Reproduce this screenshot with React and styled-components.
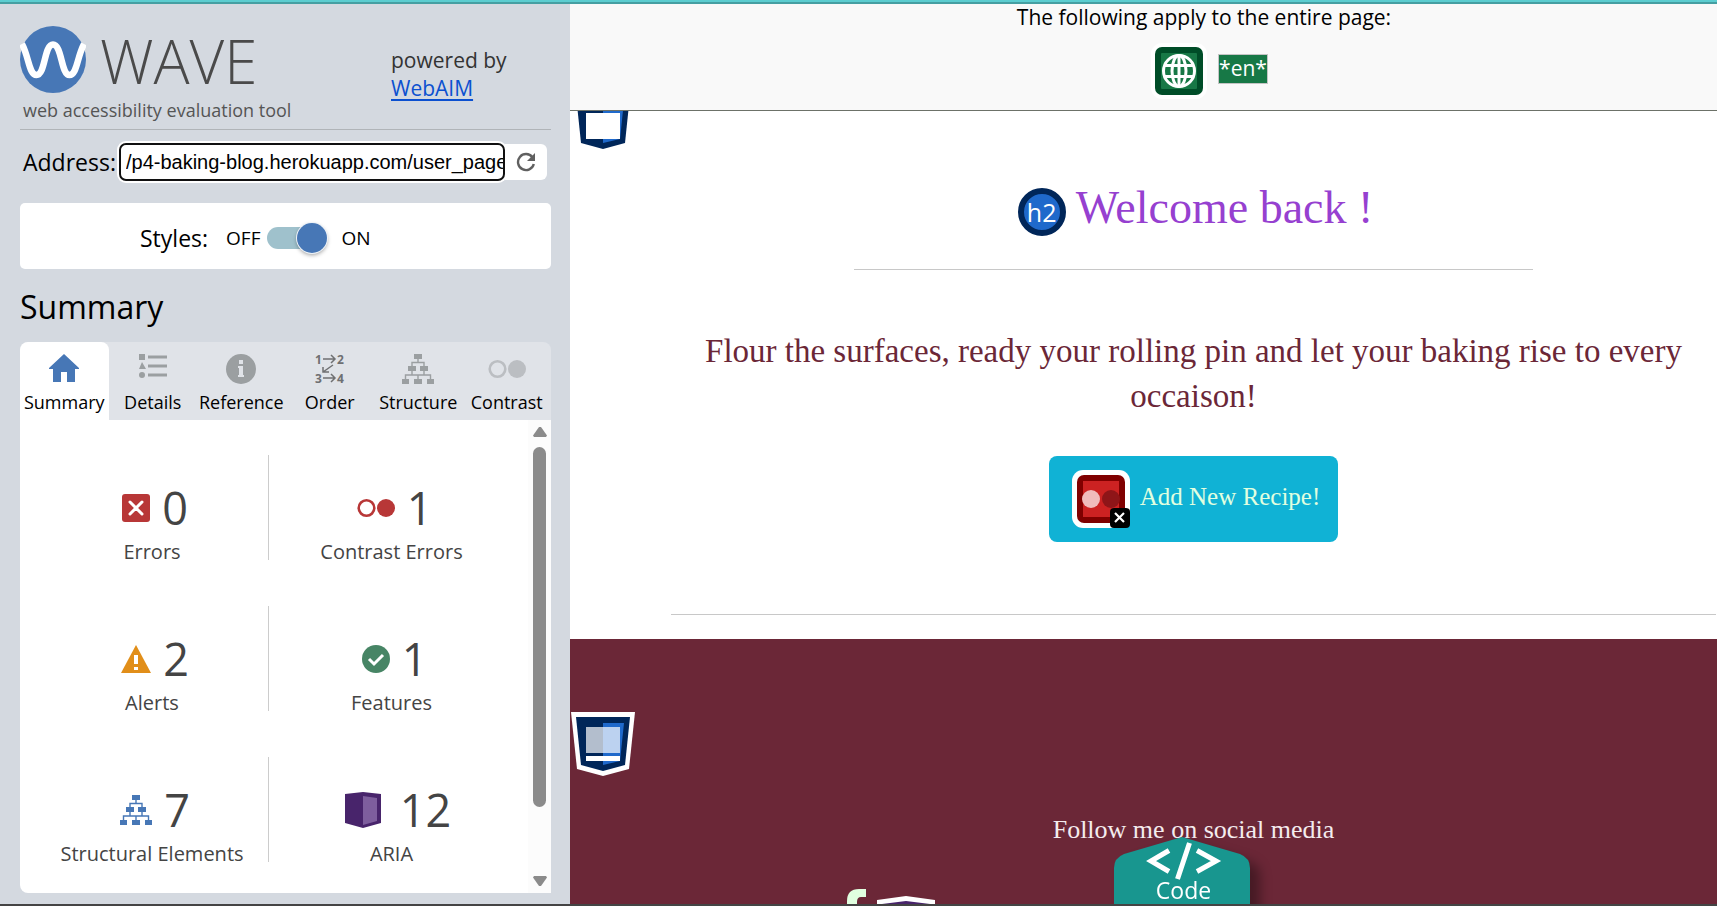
import React, { useState } from "react";
import styled, { createGlobalStyle } from "styled-components";

const sans = '"Open Sans", sans-serif';
const serif = '"Liberation Serif", serif';

const GlobalStyle = createGlobalStyle`
  *, *::before, *::after { box-sizing: border-box; }
  body { margin: 0; font-family: ${sans}; color: #000; background: #fff; }
  h1, h2, h3, p, dl, dd, dt { margin: 0; font-weight: 400; }
  button, input { font: inherit; color: inherit; }
  svg { display: block; flex: none; }
`;

const Window = styled.div`
  display: flex;
  height: 100vh;
  overflow: hidden;
  border-top: 2px solid #5ccdd0;
  border-bottom: 2px solid #444;
`;

const Sidebar = styled.aside`
  flex: 0 0 570px;
  display: flex;
  flex-direction: column;
  padding: 22px 19px 11px 20px;
  background: #d4d9e0;
  border-top: 2px solid #459fa2;
`;

const Masthead = styled.header`
  display: flex;
  justify-content: space-between;
  padding-bottom: 5px;
  border-bottom: 1px solid #b0b4b8;
`;

const Brand = styled.div`
  color: #4a4a4a;
`;

const BrandRow = styled.div`
  display: flex;
  gap: 14px;
`;

const Wordmark = styled.h1`
  font-size: 60px;
  font-weight: 300;
  line-height: 70px;
`;

const Tagline = styled.p`
  padding-left: 3px;
  font-size: 18px;
  line-height: 28px;
  color: #555;
`;

const Powered = styled.p`
  display: flex;
  flex-direction: column;
  align-items: flex-start;
  width: 160px;
  padding-top: 20px;
  font-size: 21px;
  line-height: 28px;
  color: #333;
`;

const Link = styled.a`
  color: #0b50d0;
  text-underline-offset: 3px;
`;

const AddressForm = styled.form`
  display: flex;
  align-items: center;
  margin: 13px 4px 0 3px;
`;

const FieldLabel = styled.label`
  font-size: 23px;
  line-height: 28px;
`;

const AddressInput = styled.input`
  flex: 1;
  min-width: 0;
  height: 38px;
  margin-left: 3px;
  padding: 0 0 0 5px;
  border: 2px solid #101010;
  border-radius: 7px;
  box-shadow: 0 0 0 2px #fff;
  background: #fff;
  font-family: "Liberation Sans", Arial, sans-serif;
  font-size: 20px;
  outline: none;
`;

const ReloadButton = styled.button`
  display: grid;
  place-items: center;
  width: 42px;
  height: 36px;
  padding: 0;
  border: 0;
  border-radius: 0 6px 6px 0;
  background: #fff;
`;

const StylesCard = styled.div`
  display: flex;
  align-items: center;
  height: 66px;
  margin-top: 22px;
  padding: 4px 0 0 120px;
  border-radius: 5px;
  background: #fff;
`;

const StateText = styled.span`
  font-size: 19px;
  line-height: 28px;
`;

const StylesLabel = styled(FieldLabel)`
  margin-right: 18px;
`;

const Switch = styled.input`
  appearance: none;
  position: relative;
  width: 60px;
  height: 22px;
  margin: 0 14px 0 7px;
  border-radius: 11px;
  background: #9fc1cc;

  &::before {
    content: "";
    position: absolute;
    top: -4px;
    left: ${(p) => (p.checked ? "30px" : "0")};
    width: 30px;
    height: 30px;
    border-radius: 50%;
    background: #4777b6;
    box-shadow: 0 0 0 1px #eef3f8, 0 2px 4px rgba(0, 0, 0, 0.4);
  }
`;

const SectionTitle = styled.h2`
  margin: 16px 0 13px;
  font-size: 32px;
  line-height: 44px;
`;

const Tabs = styled.nav`
  display: grid;
  grid-template-columns: repeat(6, 1fr);
  border-radius: 8px 8px 0 0;
  background: #e0e3e8;
`;

const Tab = styled.button`
  display: flex;
  flex-direction: column;
  align-items: center;
  gap: 6px;
  min-width: 0;
  padding: 12px 0 6px;
  border: 0;
  border-radius: 8px 8px 0 0;
  background: ${(p) => (p.$active ? "#fff" : "transparent")};
  font-size: 18px;
  line-height: 24px;
  white-space: nowrap;
`;

const Panel = styled.section`
  flex: 1;
  display: flex;
  min-height: 0;
  overflow: hidden;
  border-radius: 0 0 0 8px;
  background: #fff;
`;

const Stats = styled.dl`
  flex: 1;
  display: grid;
  grid-template-columns: 1fr 1fr;
  grid-auto-rows: 105px;
  row-gap: 46px;
  padding: 35px 17px 0 13px;
`;

const Stat = styled.div`
  display: flex;
  flex-direction: column-reverse;
  justify-content: flex-start;
  align-items: center;
  gap: 8px;
  color: #444;

  &:nth-child(odd) {
    margin-right: 3px;
    padding-left: 3px;
    border-right: 1px solid #ccc;
  }
`;

const StatValue = styled.dd`
  display: flex;
  align-items: center;
  gap: 12px;
  padding-left: 6px;
  font-size: 45px;
  line-height: 56px;
`;

const StatName = styled.dt`
  font-size: 20px;
  line-height: 16px;
`;

const ScrollTrack = styled.div`
  display: flex;
  flex-direction: column;
  align-items: center;
  width: 23px;
  padding: 7px 0;
  background: #fcfcfc;
`;

const ScrollThumb = styled.div`
  width: 13px;
  height: 360px;
  margin: 10px 0 auto;
  border-radius: 7px;
  background: #8b8b8b;
`;

const Preview = styled.main`
  flex: 1;
  display: flex;
  flex-direction: column;
  min-width: 0;
  overflow: hidden;
  background: #fff;
`;

const PageNotes = styled.div`
  flex: none;
  position: relative;
  z-index: 1;
  display: flex;
  flex-direction: column;
  align-items: center;
  gap: 13px;
  height: 109px;
  padding-left: 121px;
  border-top: 2px solid #459fa2;
  border-bottom: 1px solid #6c7168;
  background: #f9f9f9;
  font-size: 21px;
  line-height: 26px;
`;

const NoteRow = styled.div`
  display: flex;
  align-items: flex-start;
`;

const LanguageMark = styled.div`
  padding: 4px;
  margin: 0 11px;
  border-radius: 11px;
  background: #fff;
`;

const LanguageCode = styled.span`
  height: 30px;
  margin-top: 11px;
  border: 1px solid #c4c4c4;
  background: #177846;
  color: #fff;
`;

const Article = styled.article`
  position: relative;
  flex: none;
  display: flex;
  flex-direction: column;
  align-items: center;
  padding: 77px 1px 24px 101px;
  font-family: ${serif};
`;

const StructureBadge = styled.div`
  position: absolute;
  left: 1px;
  top: ${(p) => p.$top}px;
`;

const WelcomeRow = styled.div`
  display: flex;
  align-items: flex-start;
  gap: 10px;
  padding-left: 4px;
`;

const HeadingMark = styled.span`
  display: grid;
  place-items: center;
  width: 48px;
  height: 48px;
  border: 6px solid #002659;
  border-radius: 50%;
  background: #1f69cb;
  color: #fff;
  font-family: ${sans};
  font-size: 25px;
  line-height: 34px;
`;

const WelcomeTitle = styled.h2`
  color: #9640d0;
  font-size: 46px;
  line-height: 40px;
  white-space: nowrap;
`;

const Rule = styled.hr`
  width: ${(p) => p.$width};
  height: 1px;
  margin: ${(p) => p.$margin};
  border: 0;
  background: #c8c8c8;
`;

const Lead = styled.p`
  color: #6b2737;
  font-size: 33px;
  line-height: 45px;
  text-align: center;
`;

const RecipeButton = styled.button`
  display: flex;
  align-items: flex-start;
  gap: 10px;
  height: 86px;
  margin-top: 37px;
  padding: 14px 18px 14px 23px;
  border: 0;
  border-radius: 8px;
  background: #10b2d5;
  color: #e1ffe0;
  font-size: 25px;
  line-height: 54px;
  white-space: nowrap;
`;

const Footer = styled.footer`
  position: relative;
  flex: 1;
  min-height: 0;
  padding: 175px 0 0 100px;
  background: #6b2737;
  color: #f4ecee;
  font-family: ${serif};
  font-size: 26px;
  line-height: 32px;
  text-align: center;
`;

const CodeTab = styled.button`
  position: absolute;
  top: 198px;
  left: 544px;
  width: 136px;
  height: 100px;
  padding: 0;
  border: 0;
  background: none;
  color: #fff;
  font-family: ${sans};
  font-size: 23px;
  line-height: 24px;
  filter: drop-shadow(10px 8px 6px rgba(0, 0, 0, 0.35));
`;

const CodeLabel = styled.span`
  position: absolute;
  top: 41px;
  left: 0;
  width: 100%;
  padding-left: 3px;
`;

const SocialRow = styled.div`
  position: absolute;
  top: 250px;
  left: 277px;
  display: flex;
  gap: 10px;
`;

const DigitsSvg = styled.svg`
  margin: -4px 0;
  font-size: 12px;
  font-weight: 700;
`;

const WaveLogo = () => (
  <svg width="66" height="67" viewBox="0 0 66 67" aria-hidden="true">
    <ellipse cx="33" cy="33.5" rx="33" ry="33.5" fill="#4777b6" />
    <path
      d="M2 18 C9 31 9 49 16.5 49 C25.500 49 24 18.500 33 18.500 C42 18.500 41 49 49.500 49 C57 49 57 31 64 18"
      fill="none"
      stroke="#fff"
      strokeWidth="6.500"
    />
  </svg>
);

const ReloadIcon = () => (
  <svg width="20" height="20" viewBox="0 0 20 20" aria-hidden="true">
    <path d="M16.4 5.2 A8 8 0 1 0 17.8 12" fill="none" stroke="#606060" strokeWidth="2.4" />
    <path d="M19 1 V9 H11 Z" fill="#606060" />
  </svg>
);

const HomeIcon = () => (
  <svg width="30" height="30" viewBox="0 0 30 30" aria-hidden="true">
    <path d="M15 0 L30 14 V15 H26 V28 H18 V18 H12 V28 H4 V15 H0 V14 Z" fill="#4777b6" />
  </svg>
);

const DetailsIcon = () => (
  <svg width="28" height="30" viewBox="0 0 28 30" fill="#9b9fa1" aria-hidden="true">
    <path d="M0 0 H6 V6 H0 Z M3 8 L7 15 H0 Z M9 1.500 H28 V4.500 H9 Z M9 10.500 H28 V13.500 H9 Z M9 19.500 H28 V22.500 H9 Z" />
    <circle cx="3" cy="21" r="3" />
  </svg>
);

const ReferenceIcon = () => (
  <svg width="30" height="30" viewBox="0 0 30 30" aria-hidden="true">
    <circle cx="15" cy="15" r="15" fill="#9b9fa1" />
    <path d="M13 6 H17 V10 H13 Z M12 12 H17 V21 H18 V23 H12 V21 H13 V14 H12 Z" fill="#e0e3e8" />
  </svg>
);

const OrderIcon = () => (
  <DigitsSvg width="32" height="38" viewBox="-1 -4 32 38" fill="#6f7072" aria-hidden="true">
    <text x="0" y="10">1</text>
    <text x="22" y="10">2</text>
    <text x="0" y="29">3</text>
    <text x="22" y="29">4</text>
    <path
      d="M8 5 H20 M16 1 L20 5 L16 9 M8 24 H20 M16 20 L20 24 L16 28 M18 11 L8 18 M8 13 V18 H14"
      fill="none"
      stroke="#6f7072"
      strokeWidth="1.5"
    />
  </DigitsSvg>
);

const StructureIcon = ({ color }) => (
  <svg width="32" height="30" viewBox="0 0 32 30" aria-hidden="true">
    <path d="M12 0 H20 V5 H12 Z M6 12 H14 V17 H6 Z M18 12 H26 V17 H18 Z M0 25 H7 V30 H0 Z M12 25 H20 V30 H12 Z M25 25 H32 V30 H25 Z" fill={color} />
    <path d="M16 5 V8.500 M10 12 V8.500 H22 V12 M10 17 V21 M22 17 V21 M3.500 25 V21 H28.500 V25 M16 21 V25" fill="none" stroke={color} strokeWidth="1.4" />
  </svg>
);

const ContrastIcon = ({ color, height = 30 }) => (
  <svg width="38" height={height} viewBox={`0 0 38 ${height}`} aria-hidden="true">
    <circle cx="9.5" cy={height / 2} r="7.8" fill="none" stroke={color} strokeWidth="2.6" />
    <circle cx="29" cy={height / 2} r="9" fill={color} />
  </svg>
);

const ErrorIcon = () => (
  <svg width="28" height="28" viewBox="0 0 28 28" aria-hidden="true">
    <rect width="28" height="28" rx="3" fill="#b83737" />
    <path d="M8 8 L20 20 M20 8 L8 20" stroke="#fff" strokeWidth="3" strokeLinecap="round" />
  </svg>
);

const AlertIcon = () => (
  <svg width="30" height="28" viewBox="0 0 30 28" aria-hidden="true">
    <path d="M15 0 L30 28 H0 Z" fill="#e18e19" />
    <path d="M13 10 H17 V19 H13 Z M13 22 H17 V25 H13 Z" fill="#fff" />
  </svg>
);

const FeatureIcon = () => (
  <svg width="28" height="28" viewBox="0 0 28 28" aria-hidden="true">
    <circle cx="14" cy="14" r="14" fill="#478565" />
    <path d="M7 14 L12 19 L21 10" fill="none" stroke="#fff" strokeWidth="3" />
  </svg>
);

const AriaIcon = () => (
  <svg width="50" height="36" viewBox="-7 0 50 36" aria-hidden="true">
    <path d="M0 2 L18 0 L36 2 V31 L18 36 L0 31 Z" fill="#48246b" />
    <path d="M18 4 L32 6 V29 L18 33 Z" fill="#7e5e9d" />
  </svg>
);

const ArrowIcon = ({ down }) => (
  <svg width="14" height="10" viewBox="0 0 14 10" aria-hidden="true">
    <path d={down ? "M1 0 H13 L14 1.5 L8 10 H6 L0 1.5 Z" : "M1 10 H13 L14 8.5 L8 0 H6 L0 8.5 Z"} fill="#8b8b8b" />
  </svg>
);

const GlobeIcon = () => (
  <svg width="48" height="48" viewBox="0 0 48 48" aria-hidden="true">
    <rect width="48" height="48" rx="7" fill="#004d28" />
    <rect x="6" y="6" width="36" height="36" rx="1" fill="#177846" />
    <g fill="none" stroke="#fff" strokeWidth="3">
      <circle cx="24" cy="24" r="15.5" />
      <ellipse cx="24" cy="24" rx="7" ry="15.5" />
      <path d="M24 8 V40 M9 18.5 H39 M9 29.5 H39" />
    </g>
  </svg>
);

const ShieldIcon = ({ kind }) => (
  <svg width="64" height="64" viewBox="0 0 64 64" aria-hidden="true">
    <path d="M0 0 H64 L58 57 L32 64 L6 57 Z" fill="#fff" />
    <path d="M5 5 H59 L54 53 L32 59 L10 53 Z" fill="#002659" />
    <path d="M32 11 H53 L49 49 L32 53 Z" fill="#1f69cb" />
    {kind === "footer" ? (
      <>
        <path d="M15 15 H49 V41 H15 Z" fill="#fff" fillOpacity="0.7" />
        <path d="M15 44 H49 V49 H15 Z" fill="#fff" />
      </>
    ) : (
      <path d="M15 23 H49 V49 H15 Z" fill="#fff" />
    )}
  </svg>
);

const LowContrastIcon = () => (
  <svg width="58" height="58" viewBox="0 0 58 58" aria-hidden="true">
    <rect width="58" height="58" rx="11" fill="#fff" />
    <rect x="5" y="5" width="48" height="48" rx="7" fill="#800000" />
    <rect x="11" y="11" width="36" height="36" fill="#cc2222" />
    <circle cx="19" cy="29" r="9" fill="#f0bcbc" />
    <circle cx="39" cy="29" r="9" fill="#8e1518" />
    <rect x="38" y="38" width="20" height="20" rx="4" fill="#000" />
    <path d="M43 43 L52 52 M52 43 L43 52" stroke="#fff" strokeWidth="2.2" />
  </svg>
);

const CodeShape = () => (
  <svg width="136" height="100" viewBox="0 0 136 100" aria-hidden="true">
    <path d="M68 0 L126 17 Q136 21 136 31 V100 H0 V31 Q0 21 10 17 Z" fill="#18968f" />
    <path d="M55 13.500 L37 24 L55 34.500 M83 13.500 L102 24 L83 34.500 M75.500 6 L63.500 42" fill="none" stroke="#fff" strokeWidth="5" />
  </svg>
);

const FacebookIcon = () => (
  <svg width="20" height="35" viewBox="0 0 20 35" aria-hidden="true">
    <path d="M0 35 V12 Q0 0 12 0 H19 V8 H14 Q10 8 10 13 V35 Z" fill="#e1ffe0" />
  </svg>
);

const AriaBadgeIcon = () => (
  <svg width="58" height="44" viewBox="0 0 58 44" aria-hidden="true">
    <path d="M0 11 L29 7 L58 11 V44 H0 Z" fill="#fff" />
    <path d="M5 15 L29 12 L53 15 V44 H5 Z" fill="#48246b" />
  </svg>
);

const tabs = [
  ["Summary", <HomeIcon />],
  ["Details", <DetailsIcon />],
  ["Reference", <ReferenceIcon />],
  ["Order", <OrderIcon />],
  ["Structure", <StructureIcon color="#9b9fa1" />],
  ["Contrast", <ContrastIcon color="#bbbec2" />],
];

const stats = [
  ["Errors", 0, <ErrorIcon />],
  ["Contrast Errors", 1, <ContrastIcon color="#b83737" height={20} />],
  ["Alerts", 2, <AlertIcon />],
  ["Features", 1, <FeatureIcon />],
  ["Structural Elements", 7, <StructureIcon color="#4777b6" />],
  ["ARIA", 12, <AriaIcon />],
];

export default function App() {
  const [active, setActive] = useState("Summary");
  const [stylesOn, setStylesOn] = useState(true);
  const [address, setAddress] = useState("/p4-baking-blog.herokuapp.com/user_page");

  return (
    <Window>
      <GlobalStyle />
      <Sidebar>
        <Masthead>
          <Brand>
            <BrandRow>
              <WaveLogo />
              <Wordmark>WAVE</Wordmark>
            </BrandRow>
            <Tagline>web accessibility evaluation tool</Tagline>
          </Brand>
          <Powered>
            powered by
            <Link href="#webaim">WebAIM</Link>
          </Powered>
        </Masthead>
        <AddressForm onSubmit={(e) => e.preventDefault()}>
          <FieldLabel htmlFor="address">Address:</FieldLabel>
          <AddressInput id="address" value={address} onChange={(e) => setAddress(e.target.value)} />
          <ReloadButton type="submit" aria-label="Reload">
            <ReloadIcon />
          </ReloadButton>
        </AddressForm>
        <StylesCard>
          <StylesLabel htmlFor="styles">Styles:</StylesLabel>
          <StateText>OFF</StateText>
          <Switch
            id="styles"
            type="checkbox"
            role="switch"
            checked={stylesOn}
            onChange={(e) => setStylesOn(e.target.checked)}
          />
          <StateText>ON</StateText>
        </StylesCard>
        <SectionTitle>{active}</SectionTitle>
        <Tabs>
          {tabs.map(([name, icon]) => (
            <Tab key={name} type="button" $active={name === active} onClick={() => setActive(name)}>
              {icon}
              {name}
            </Tab>
          ))}
        </Tabs>
        <Panel>
          <Stats>
            {stats.map(([name, count, icon]) => (
              <Stat key={name}>
                <StatName>{name}</StatName>
                <StatValue>
                  {icon}
                  {count}
                </StatValue>
              </Stat>
            ))}
          </Stats>
          <ScrollTrack>
            <ArrowIcon />
            <ScrollThumb />
            <ArrowIcon down />
          </ScrollTrack>
        </Panel>
      </Sidebar>
      <Preview>
        <PageNotes>
          <p>The following apply to the entire page:</p>
          <NoteRow>
            <LanguageMark>
              <GlobeIcon />
            </LanguageMark>
            <LanguageCode>*en*</LanguageCode>
          </NoteRow>
        </PageNotes>
        <Article>
          <StructureBadge $top={-21}>
            <ShieldIcon kind="main" />
          </StructureBadge>
          <WelcomeRow>
            <HeadingMark>h2</HeadingMark>
            <WelcomeTitle>Welcome back !</WelcomeTitle>
          </WelcomeRow>
          <Rule $width="65%" $margin="33px 0 59px" />
          <Lead>Flour the surfaces, ready your rolling pin and let your baking rise to every occaison!</Lead>
          <RecipeButton type="button">
            <LowContrastIcon />
            Add New Recipe!
          </RecipeButton>
          <Rule $width="100%" $margin="72px 0 0" />
        </Article>
        <Footer>
          <StructureBadge $top={73}>
            <ShieldIcon kind="footer" />
          </StructureBadge>
          <p>Follow me on social media</p>
          <SocialRow>
            <FacebookIcon />
            <AriaBadgeIcon />
          </SocialRow>
          <CodeTab type="button">
            <CodeShape />
            <CodeLabel>Code</CodeLabel>
          </CodeTab>
        </Footer>
      </Preview>
    </Window>
  );
}
